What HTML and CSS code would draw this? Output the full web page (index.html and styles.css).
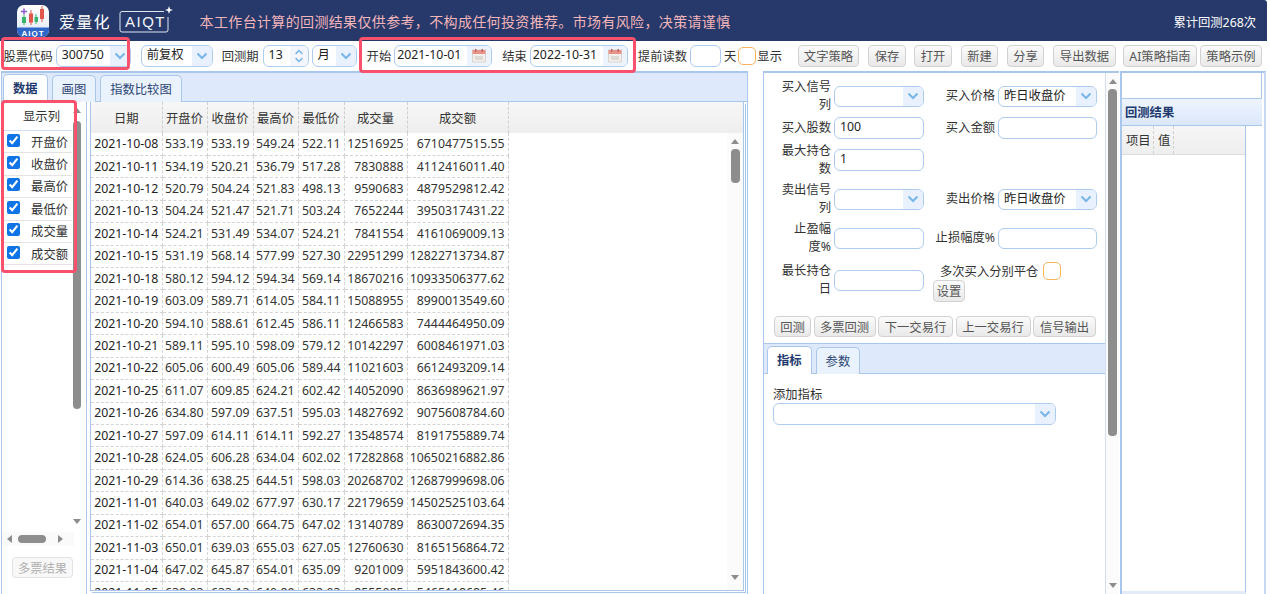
FILE: index.html
```html
<!DOCTYPE html>
<html lang="zh-CN">
<head>
    <meta charset="UTF-8">
    <title>爱量化 AIQT</title>
    <link rel="stylesheet" href="styles.css">
</head>
<body>
    <svg class="sprites" width="0" height="0">
        <symbol id="chev" viewBox="0 0 12 8"><path d="M1.5 1.5 6 6l4.5-4.5" fill="none" stroke="#78b6ea" stroke-width="2"/></symbol>
        <symbol id="cal" viewBox="0 0 14 14">
            <rect x="0.5" y="1" width="13" height="12" fill="#f3f0ec" stroke="#d8d4d0"/>
            <rect x="0.5" y="1" width="13" height="4" fill="#e8938a"/>
            <rect x="3" y="0" width="1.5" height="3" fill="#b96a62"/>
            <rect x="9.500" y="0" width="1.5" height="3" fill="#b96a62"/>
            <rect x="3" y="7" width="8" height="4" fill="#ddd9d4"/>
        </symbol>
    </svg>

    <header class="topbar">
        <svg class="logo" width="34" height="34" viewBox="0 0 34 34">
            <defs>
                <linearGradient id="logobg" x1="0" y1="0" x2="0" y2="1">
                    <stop offset="0" stop-color="#ffffff"/>
                    <stop offset="1" stop-color="#dfe8f6"/>
                </linearGradient>
            </defs>
            <rect x="1" y="1" width="32" height="32" rx="7" fill="url(#logobg)"/>
            <path d="M1 23.500h32v2.500a7 7 0 0 1-7 7H8a7 7 0 0 1-7-7z" fill="#2f67c9"/>
            <path d="M5 7.500h6M8 4.500v6" stroke="#8a5bd0" stroke-width="1.5"/>
            <path d="M15 6v15M26 2v16" stroke="#e2574c"/>
            <path d="M8 11v10M20 10v10" stroke="#3bb56c"/>
            <rect x="6" y="13" width="4" height="6" fill="#3bb56c"/>
            <rect x="13" y="9.500" width="4" height="9" fill="#e2574c"/>
            <rect x="18.500" y="13" width="3.500" height="5" fill="#3bb56c"/>
            <rect x="24" y="5" width="4" height="10" fill="#e2574c"/>
            <text x="17" y="31.500" class="logo-text">AIQT</text>
        </svg>
        <span class="brand">爱量化</span>
        <svg class="aiqt" width="56" height="28" viewBox="0 0 56 28">
            <path d="M46 5.500H4a2 2 0 0 0-2 2v16.500a2 2 0 0 0 2 2h44a2 2 0 0 0 2-2V11" fill="none" stroke="#dfe6f2"/>
            <text x="7" y="20.500" class="aiqt-text">AIQT</text>
            <path d="M51 0 52 3l3 1-3 1-1 3-1-3-3-1 3-1z" fill="#fff"/>
        </svg>
        <span class="warning">本工作台计算的回测结果仅供参考，不构成任何投资推荐。市场有风险，决策请谨慎</span>
        <span class="counter">累计回测268次</span>
    </header>

    <div class="toolbar">
        <label class="lbl">股票代码</label>
        <div class="combo w75"><span class="val">300750</span><span class="arrow"><svg width="12" height="8"><use href="#chev"/></svg></span></div>
        <div class="combo w72 ml7"><span class="val">前复权</span><span class="arrow"><svg width="12" height="8"><use href="#chev"/></svg></span></div>
        <label class="lbl ml6">回测期</label>
        <div class="combo w46 ml1"><span class="val">13</span><span class="spin"><svg width="10" height="6"><use href="#chev"/></svg><svg width="10" height="6"><use href="#chev"/></svg></span></div>
        <div class="combo w45"><span class="val">月</span><span class="arrow"><svg width="12" height="8"><use href="#chev"/></svg></span></div>
        <label class="lbl ml7">开始</label>
        <div class="combo w98"><span class="val val-date">2021-10-01</span><span class="arrow cal"><svg width="14" height="14"><use href="#cal"/></svg></span></div>
        <label class="lbl ml7">结束</label>
        <div class="combo w98"><span class="val val-date">2022-10-31</span><span class="arrow cal"><svg width="14" height="14"><use href="#cal"/></svg></span></div>
        <label class="lbl ml7">提前读数</label>
        <div class="combo w31"></div>
        <label class="lbl">天</label>
        <div class="check-empty check-bar"></div>
        <label class="lbl lbl-tight">显示</label>
        <button class="btn w61 ml13">文字策略</button>
        <button class="btn w38 ml6">保存</button>
        <button class="btn w38 ml5">打开</button>
        <button class="btn w37 ml6">新建</button>
        <button class="btn w37 ml6">分享</button>
        <button class="btn w63 ml6">导出数据</button>
        <button class="btn w74 ml4">AI策略指南</button>
        <button class="btn w62">策略示例</button>
    </div>

    <div class="mark mark-code"></div>
    <div class="mark mark-date"></div>
    <div class="mark mark-cols"></div>

    <main class="workspace">
        <section class="left">
            <div class="tabs">
                <span class="tab active">数据</span>
                <span class="tab">画图</span>
                <span class="tab">指数比较图</span>
            </div>
            <div class="left-body">
                <aside class="columns">
                    <div class="columns-scroll">
                        <div class="column-list">
                            <div class="column-head">显示列</div>
                            <label class="column-row"><input type="checkbox" checked><span>开盘价</span></label>
                            <label class="column-row"><input type="checkbox" checked><span>收盘价</span></label>
                            <label class="column-row"><input type="checkbox" checked><span>最高价</span></label>
                            <label class="column-row"><input type="checkbox" checked><span>最低价</span></label>
                            <label class="column-row"><input type="checkbox" checked><span>成交量</span></label>
                            <label class="column-row"><input type="checkbox" checked><span>成交额</span></label>
                        </div>
                        <div class="vbar vbar-cols">
                            <i class="up"></i>
                            <b class="thumb"></b>
                            <i class="down"></i>
                        </div>
                    </div>
                    <div class="hbar">
                        <i class="lt"></i>
                        <b class="hthumb"></b>
                        <i class="rt"></i>
                    </div>
                    <button class="btn btn-off">多票结果</button>
                </aside>
                <div class="grid-wrap">
                    <table class="data">
                        <thead>
                            <tr><th class="c1">日期</th><th class="c2">开盘价</th><th class="c3">收盘价</th><th class="c4">最高价</th><th class="c5">最低价</th><th class="c6">成交量</th><th class="c7">成交额</th><th></th></tr>
                        </thead>
                        <tbody>
                            <tr><td>2021-10-08</td><td>533.19</td><td>533.19</td><td>549.24</td><td>522.11</td><td>12516925</td><td>6710477515.55</td><td></td></tr>
                            <tr><td>2021-10-11</td><td>534.19</td><td>520.21</td><td>536.79</td><td>517.28</td><td>7830888</td><td>4112416011.40</td><td></td></tr>
                            <tr><td>2021-10-12</td><td>520.79</td><td>504.24</td><td>521.83</td><td>498.13</td><td>9590683</td><td>4879529812.42</td><td></td></tr>
                            <tr><td>2021-10-13</td><td>504.24</td><td>521.47</td><td>521.71</td><td>503.24</td><td>7652244</td><td>3950317431.22</td><td></td></tr>
                            <tr><td>2021-10-14</td><td>524.21</td><td>531.49</td><td>534.07</td><td>524.21</td><td>7841554</td><td>4161069009.13</td><td></td></tr>
                            <tr><td>2021-10-15</td><td>531.19</td><td>568.14</td><td>577.99</td><td>527.30</td><td>22951299</td><td>12822713734.87</td><td></td></tr>
                            <tr><td>2021-10-18</td><td>580.12</td><td>594.12</td><td>594.34</td><td>569.14</td><td>18670216</td><td>10933506377.62</td><td></td></tr>
                            <tr><td>2021-10-19</td><td>603.09</td><td>589.71</td><td>614.05</td><td>584.11</td><td>15088955</td><td>8990013549.60</td><td></td></tr>
                            <tr><td>2021-10-20</td><td>594.10</td><td>588.61</td><td>612.45</td><td>586.11</td><td>12466583</td><td>7444464950.09</td><td></td></tr>
                            <tr><td>2021-10-21</td><td>589.11</td><td>595.10</td><td>598.09</td><td>579.12</td><td>10142297</td><td>6008461971.03</td><td></td></tr>
                            <tr><td>2021-10-22</td><td>605.06</td><td>600.49</td><td>605.06</td><td>589.44</td><td>11021603</td><td>6612493209.14</td><td></td></tr>
                            <tr><td>2021-10-25</td><td>611.07</td><td>609.85</td><td>624.21</td><td>602.42</td><td>14052090</td><td>8636989621.97</td><td></td></tr>
                            <tr><td>2021-10-26</td><td>634.80</td><td>597.09</td><td>637.51</td><td>595.03</td><td>14827692</td><td>9075608784.60</td><td></td></tr>
                            <tr><td>2021-10-27</td><td>597.09</td><td>614.11</td><td>614.11</td><td>592.27</td><td>13548574</td><td>8191755889.74</td><td></td></tr>
                            <tr><td>2021-10-28</td><td>624.05</td><td>606.28</td><td>634.04</td><td>602.02</td><td>17282868</td><td>10650216882.86</td><td></td></tr>
                            <tr><td>2021-10-29</td><td>614.36</td><td>638.25</td><td>644.51</td><td>598.03</td><td>20268702</td><td>12687999698.06</td><td></td></tr>
                            <tr><td>2021-11-01</td><td>640.03</td><td>649.02</td><td>677.97</td><td>630.17</td><td>22179659</td><td>14502525103.64</td><td></td></tr>
                            <tr><td>2021-11-02</td><td>654.01</td><td>657.00</td><td>664.75</td><td>647.02</td><td>13140789</td><td>8630072694.35</td><td></td></tr>
                            <tr><td>2021-11-03</td><td>650.01</td><td>639.03</td><td>655.03</td><td>627.05</td><td>12760630</td><td>8165156864.72</td><td></td></tr>
                            <tr><td>2021-11-04</td><td>647.02</td><td>645.87</td><td>654.01</td><td>635.09</td><td>9201009</td><td>5951843600.42</td><td></td></tr>
                            <tr><td>2021-11-05</td><td>638.03</td><td>633.13</td><td>640.89</td><td>632.03</td><td>8555085</td><td>5465118685.46</td><td></td></tr>
                        </tbody>
                    </table>
                    <div class="vbar vbar-grid">
                        <i class="up"></i>
                        <b class="thumb"></b>
                        <i class="down"></i>
                    </div>
                </div>
            </div>
        </section>

        <section class="settings">
            <div class="settings-inner">
                <div class="form">
                    <label class="flabel">买入信号列</label>
                    <div class="combo h21"><span class="val"></span><span class="arrow"><svg width="12" height="8"><use href="#chev"/></svg></span></div>
                    <label class="flabel">买入价格</label>
                    <div class="combo h21"><span class="val">昨日收盘价</span><span class="arrow"><svg width="12" height="8"><use href="#chev"/></svg></span></div>

                    <label class="flabel">买入股数</label>
                    <div class="combo"><span class="val">100</span></div>
                    <label class="flabel">买入金额</label>
                    <div class="combo"></div>

                    <label class="flabel">最大持仓数</label>
                    <div class="combo"><span class="val">1</span></div>
                    <span></span><span></span>

                    <label class="flabel">卖出信号列</label>
                    <div class="combo h21"><span class="val"></span><span class="arrow"><svg width="12" height="8"><use href="#chev"/></svg></span></div>
                    <label class="flabel">卖出价格</label>
                    <div class="combo h21"><span class="val">昨日收盘价</span><span class="arrow"><svg width="12" height="8"><use href="#chev"/></svg></span></div>

                    <label class="flabel">止盈幅度%</label>
                    <div class="combo h21"></div>
                    <label class="flabel">止损幅度%</label>
                    <div class="combo h21"></div>

                    <label class="flabel">最长持仓日</label>
                    <div class="combo h21"></div>
                    <div class="multi">
                        <div class="multi-row"><span>多次买入分别平仓</span><div class="check-empty"></div></div>
                        <button class="btn w32">设置</button>
                    </div>
                </div>
                <div class="actions">
                    <button class="btn w37">回测</button>
                    <button class="btn w62">多票回测</button>
                    <button class="btn w75">下一交易行</button>
                    <button class="btn w75">上一交易行</button>
                    <button class="btn w63">信号输出</button>
                </div>
                <div class="tabs tabs-small">
                    <span class="tab active">指标</span>
                    <span class="tab">参数</span>
                </div>
                <div class="indicator">
                    <div class="indicator-label">添加指标</div>
                    <div class="combo w282"><span class="val"></span><span class="arrow"><svg width="12" height="8"><use href="#chev"/></svg></span></div>
                </div>
            </div>
            <div class="vbar vbar-form">
                <i class="up"></i>
                <b class="thumb"></b>
                <i class="down"></i>
            </div>
        </section>

        <section class="results">
            <div class="result-top"></div>
            <div class="result-title">回测结果</div>
            <div class="result-table">
                <div class="result-head"><span class="rc1">项目</span><span class="rc2">值</span></div>
            </div>
        </section>
    </main>
</body>
</html>
```

FILE: styles.css
```css
* {
    margin: 0;
    padding: 0;
    box-sizing: border-box;
}

body {
    width: 1270px;
    height: 594px;
    overflow: hidden;
    background: #fff;
    color: #333;
    font-family: "Noto Sans", "Noto Sans CJK SC", sans-serif;
    font-size: 12.3px;
    position: relative;
}

.sprites {
    position: absolute;
}

/* top bar */
.topbar {
    height: 41px;
    width: 1267px;
    background: #26396a;
    display: flex;
    align-items: center;
    padding-left: 16px;
    border-top-right-radius: 3px;
}

.logo-text {
    font: bold 8px "Liberation Sans", sans-serif;
    fill: #fff;
    text-anchor: middle;
    letter-spacing: 1px;
}

.brand {
    margin-left: 9px;
    color: #fff;
    font-size: 16px;
    letter-spacing: 1.2px;
}

.aiqt {
    margin-left: 7px;
    margin-top: -2px;
}

.aiqt-text {
    font: 15px "Liberation Sans", sans-serif;
    fill: #f1f4fa;
    letter-spacing: 1.500px;
}

.warning {
    margin-left: 26px;
    color: #f4b5ba;
    font-size: 14px;
    letter-spacing: 0.35px;
}

.counter {
    margin-left: auto;
    margin-right: 11px;
    margin-top: 3px;
    color: #fff;
}

/* toolbar */
.toolbar {
    height: 30px;
    padding-left: 3.5px;
    display: flex;
    align-items: center;
    gap: 3px;
}

.lbl {
    white-space: nowrap;
}

.lbl-tight {
    margin-left: -2px;
}

.ml1 { margin-left: 1px; }
.ml4 { margin-left: 4px; }
.ml5 { margin-left: 5px; }
.ml6 { margin-left: 6px; }
.ml7 { margin-left: 7px; }
.ml13 { margin-left: 13px; }

.combo {
    height: 22px;
    flex: none;
    display: flex;
    border: 1px solid #aecbf0;
    border-radius: 6px;
    background: #fff;
    overflow: hidden;
    color: #222;
}

.h21 {
    height: 21px;
}

.val {
    flex: 1;
    padding-left: 5px;
    line-height: 18px;
    white-space: nowrap;
    overflow: hidden;
}

.val-date {
    padding-left: 2px;
}

.arrow {
    width: 20px;
    flex: none;
    background: #e8f1fd;
    display: flex;
    align-items: center;
    justify-content: center;
}

.arrow.cal {
    background: #eef4fd;
    width: 24px;
}

.spin {
    width: 18px;
    flex: none;
    display: flex;
    flex-direction: column;
    align-items: center;
    justify-content: center;
    gap: 2px;
    background: #f3f7fd;
}

.spin svg:first-child {
    transform: rotate(180deg);
}

.w31 { width: 31px; }
.w32 { width: 32px; }
.w37 { width: 37px; }
.w38 { width: 38px; }
.w45 { width: 45px; }
.w46 { width: 46px; }
.w61 { width: 61px; }
.w62 { width: 62px; }
.w63 { width: 63px; }
.w72 { width: 72px; }
.w74 { width: 74px; }
.w75 { width: 75px; }
.w98 { width: 98px; }
.w282 { width: 283px; }

.check-empty {
    width: 18px;
    height: 18px;
    flex: none;
    border: 1px solid #f7b45c;
    border-radius: 5px;
    background: #fff;
}

.check-bar {
    margin-left: -1px;
}

.btn {
    height: 22px;
    flex: none;
    border: 1px solid #d2d2d2;
    border-radius: 4px;
    background: linear-gradient(#fbfbfb, #e9e9e9);
    color: #555;
    font: inherit;
    white-space: nowrap;
}

/* red highlight boxes, these lie over the page */
.mark {
    position: absolute;
    border: 3px solid #f9506b;
    border-radius: 4px;
    pointer-events: none;
    z-index: 5;
}

.mark-code { left: 1px; top: 37px; width: 129px; height: 33px; }
.mark-date { left: 359px; top: 37px; width: 277px; height: 36px; }
.mark-cols { left: 1px; top: 100px; width: 76px; height: 173px; }

/* main area */
.workspace {
    height: 523px;
    display: flex;
    align-items: stretch;
}

.left {
    width: 747px;
    margin-left: 1px;
    border-top: 2px solid #a9c6ec;
    border-left: 1px solid #a9c6ec;
    border-right: 1px solid #a9c6ec;
    display: flex;
    flex-direction: column;
}

.tabs {
    height: 29px;
    flex: none;
    display: flex;
    align-items: flex-end;
    gap: 4px;
    padding-left: 1px;
    background: #deeafc;
    border-bottom: 1px solid #a9c6ec;
}

.tab {
    height: 27px;
    padding: 0 9px;
    line-height: 27px;
    background: #eaf2fd;
    border: 1px solid #a9c6ec;
    border-bottom: 0;
    border-radius: 5px 5px 0 0;
    color: #2c4575;
    margin-bottom: -1px;
}

.tab.active {
    background: #fff;
    height: 28px;
    font-weight: bold;
    color: #1f3a6e;
}

.left-body {
    flex: 1;
    min-height: 0;
    display: flex;
    gap: 3px;
    padding-right: 3px;
}

.columns {
    width: 85px;
    flex: none;
    display: flex;
    flex-direction: column;
    border-right: 1px solid #a9c6ec;
}

.columns-scroll {
    height: 430px;
    display: flex;
}

.column-list {
    width: 70px;
    flex: none;
    padding-left: 2px;
}

.column-head {
    height: 29px;
    line-height: 29px;
    text-align: center;
    padding-left: 7px;
    border-bottom: 1px solid #cfe0f5;
}

.column-row {
    height: 22.4px;
    display: flex;
    align-items: center;
    justify-content: space-between;
    padding: 0 4px 0 3px;
    border-bottom: 1px solid #e4e4e4;
}

.column-row input {
    width: 13px;
    height: 13px;
    accent-color: #0f75e6;
    margin-top: -3px;
}

.vbar {
    display: flex;
    flex-direction: column;
    align-items: center;
}

.vbar .up,
.vbar .down {
    width: 0;
    height: 0;
    flex: none;
    border-left: 4px solid transparent;
    border-right: 4px solid transparent;
}

.vbar .up {
    border-bottom: 5px solid #8c8c8c;
}

.vbar .down {
    border-top: 5px solid #8c8c8c;
    margin-top: auto;
}

.thumb {
    width: 8px;
    background: #8d8d8d;
    border-radius: 4px;
    flex: none;
}

.vbar-cols {
    width: 10px;
    padding: 6px 0 8px;
}

.vbar-cols .thumb {
    height: 288px;
    margin-top: 8px;
}

.hbar {
    height: 14px;
    width: 72px;
    margin-left: 0;
    padding: 0 11px 0 5px;
    display: flex;
    align-items: center;
    background: #fafafa;
}

.hbar .lt,
.hbar .rt {
    width: 0;
    height: 0;
    flex: none;
    border-top: 4px solid transparent;
    border-bottom: 4px solid transparent;
}

.hbar .lt {
    border-right: 5px solid #8c8c8c;
}

.hbar .rt {
    border-left: 5px solid #8c8c8c;
    margin-left: auto;
}

.hthumb {
    width: 28px;
    height: 8px;
    margin-left: 6px;
    background: #8d8d8d;
    border-radius: 4px;
}

.btn-off {
    width: 61px;
    height: 21px;
    margin: 11px 0 0 10px;
    color: #b0b0b0;
    background: #f8f8f8;
    border-color: #e2e2e2;
}

.grid-wrap {
    flex: 1;
    min-width: 0;
    height: 489px;
    position: relative;
    overflow: hidden;
    border-left: 1px solid #a9c6ec;
    border-bottom: 1px solid #a9c6ec;
    border-right: 1px solid #a9c6ec;
    box-shadow: 1px 1px 0 #fff, 2px 2px 0 #a9c6ec;
}

.data {
    width: 100%;
    table-layout: fixed;
    border-collapse: collapse;
}

.data th {
    height: 31px;
    font-weight: normal;
    background: linear-gradient(#f6f6f6, #eeeeee);
    border-right: 1px dashed #cfcfcf;
    color: #333;
}

.data th:last-child {
    border-right: 0;
}

.data td {
    height: 22.43px;
    padding: 0 3px 0 0;
    text-align: right;
    border-right: 1px dashed #d4d4d4;
    border-bottom: 1px dashed #d4d4d4;
    white-space: nowrap;
    line-height: 16px;
}

.data td:first-child {
    text-align: center;
    color: #222;
    padding: 0;
}

.data td:last-child {
    border: 0;
}

.c1 { width: 71px; }
.c2 { width: 45px; }
.c3 { width: 46px; }
.c4 { width: 45px; }
.c5 { width: 46px; }
.c6 { width: 63px; }
.c7 { width: 101px; }

/* fake scrollbar sitting on top of the grid */
.vbar-grid {
    position: absolute;
    top: 31px;
    right: 0;
    bottom: 0;
    width: 16px;
    padding: 6px 0 10px;
    background: #fbfbfb;
}

.vbar-grid .thumb {
    width: 9px;
    height: 34px;
    margin-top: 5px;
}

.settings {
    width: 356px;
    margin-left: 15px;
    flex: none;
    display: flex;
    border-top: 2px solid #a9c6ec;
    border-left: 1px solid #a9c6ec;
}

.settings-inner {
    width: 341px;
    flex: none;
}

.form {
    margin: 7px 0 0 10px;
    display: grid;
    grid-template-columns: 57px 90px 68px 99px;
    grid-template-rows: 32px 32px 32px 46px 32px 52px;
    column-gap: 3px;
    align-items: center;
}

.flabel {
    text-align: right;
    line-height: 18px;
}

.multi {
    grid-column: 3 / 5;
    align-self: start;
    padding: 7px 0 0 6px;
}

.multi-row {
    height: 19px;
    display: flex;
    align-items: center;
    gap: 5px;
    padding-left: 7px;
}

.actions {
    margin: 10px 0 0 10px;
    display: flex;
    gap: 2.5px;
}

.actions .btn {
    height: 21px;
}

.tabs-small {
    margin-top: 6px;
    height: 31px;
    padding-left: 3px;
    border-top: 1px solid #a9c6ec;
}

.indicator {
    padding: 13px 0 0 9px;
}

.indicator-label {
    line-height: 16px;
}

.vbar-form {
    width: 14px;
    padding: 6px 0 6px;
    background: #fbfbfb;
    border-left: 1px solid #cfe0f5;
}

.vbar-form .thumb {
    width: 9px;
    height: 347px;
    margin-top: 5px;
}

.results {
    width: 146px;
    margin-left: 1px;
    flex: none;
    border-top: 2px solid #a9c6ec;
    border-left: 2px solid #a9c6ec;
    border-right: 2px solid #c8daf3;
}

.result-top {
    width: 140px;
    height: 26px;
    border-right: 1px solid #a9c6ec;
    border-bottom: 1px solid #a9c6ec;
}

.result-title {
    width: 140px;
    height: 27px;
    line-height: 28px;
    padding-left: 3px;
    font-weight: bold;
    color: #1f3a6e;
    background: linear-gradient(#eef4fd, #dbe8fb);
    border-bottom: 1px solid #a9c6ec;
}

.result-table {
    width: 124px;
    height: 468px;
    border-right: 1px solid #a9c6ec;
    border-bottom: 3px solid #e4ebf8;
}

.result-head {
    height: 29px;
    display: flex;
    background: linear-gradient(#f6f6f6, #eeeeee);
    border-bottom: 1px solid #ddd;
}

.result-head span {
    line-height: 29px;
    padding-left: 4px;
    border-right: 1px dashed #cfcfcf;
}

.rc1 { width: 32px; }
.rc2 { width: 20px; }
```
